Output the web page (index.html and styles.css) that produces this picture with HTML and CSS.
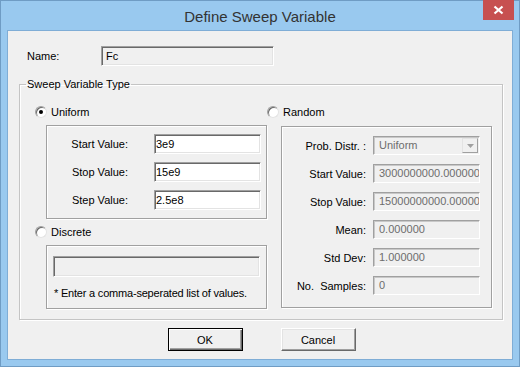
FILE: index.html
```html
<!DOCTYPE html>
<html lang="en">
<head>
  <meta charset="UTF-8" />
  <title>Define Sweep Variable</title>
  <link rel="stylesheet" href="styles.css">
</head>
<body>

  <div class="window">
    <div class="titlebar">
      <span></span>
      <div class="title">Define Sweep Variable</div>
      <div class="close">
        <svg width="31" height="20" viewBox="0 0 31 20">
          <path d="M11.5 6.5 L19.5 13.5 M19.5 6.5 L11.5 13.5" stroke="#fff" stroke-width="2.2" />
        </svg>
      </div>
    </div>

    <div class="client">
      <div class="name-row">
        <label>Name:</label>
        <div class="field name-field">Fc</div>
      </div>

      <fieldset class="group">
        <legend>Sweep Variable Type</legend>
        <div class="cols">

          <div class="col-left">
            <div class="radio-row">
              <span class="radio checked"></span>Uniform
            </div>
            <div class="box uniform-box">
              <label>Start Value:</label><div class="field white">3e9</div>
              <label>Stop Value:</label><div class="field white">15e9</div>
              <label>Step Value:</label><div class="field white">2.5e8</div>
            </div>

            <div class="radio-row">
              <span class="radio"></span>Discrete
            </div>
            <div class="box discrete-box">
              <div class="field list-field"></div>
              <div class="note">* Enter a comma-seperated list of values.</div>
            </div>
          </div>

          <div class="col-right">
            <div class="radio-row">
              <span class="radio"></span>Random
            </div>
            <div class="box random-box">
              <label>Prob. Distr. :</label>
              <div class="field off select">
                <span>Uniform</span>
                <span class="drop"><svg width="7" height="4" viewBox="0 0 7 4"><path d="M0 0 H7 L3.5 4 Z" fill="#a0a0a0" /></svg></span>
              </div>
              <label>Start Value:</label><div class="field off">3000000000.000000</div>
              <label>Stop Value:</label><div class="field off">15000000000.000000</div>
              <label>Mean:</label><div class="field off">0.000000</div>
              <label>Std Dev:</label><div class="field off">1.000000</div>
              <label>No.&nbsp; Samples:</label><div class="field off">0</div>
            </div>
          </div>

        </div>
      </fieldset>

      <div class="buttons">
        <button class="btn default">OK</button>
        <button class="btn">Cancel</button>
      </div>
    </div>
  </div>

</body>
</html>
```

FILE: styles.css
```css
* {
  box-sizing: border-box;
}

body {
  margin: 0;
  padding: 0;
  font-family: "Liberation Sans", Arial, sans-serif;
  font-size: 11px;
  color: #000;
  background: #99c9ef;
}

.window {
  width: 520px;
  height: 367px;
  background: #99c9ef;
  border: 1px solid #6f9cc4;
}

.titlebar {
  height: 29px;
  display: grid;
  grid-template-columns: 1fr auto 1fr;
  align-items: center;
}

.title {
  font-size: 15px;
  color: #333;
  padding-top: 1px;
}

.close {
  justify-self: end;
  align-self: start;
  width: 31px;
  height: 20px;
  margin-top: -1px;
  margin-right: 5px;
  background: #c75050;
}

.close svg {
  display: block;
}

.client {
  margin: 0 6px;
  width: 506px;
  height: 330px;
  background: #f0f0f0;
  border: 1px solid #7fadd6;
  padding-top: 15px;
}

/* sunken edit boxes */
.field {
  height: 20px;
  line-height: 18px;
  background: #f0f0f0;
  border-top: 1px solid #a0a0a0;
  border-left: 1px solid #a0a0a0;
  border-bottom: 1px solid #fff;
  border-right: 1px solid #fff;
  box-shadow: inset 1px 1px 0 #696969, inset -1px -1px 0 #e3e3e3;
  padding-left: 2px;
  white-space: nowrap;
  overflow: hidden;
}

.field.white {
  background: #fff;
  padding-left: 1px;
}

.field.off {
  color: #6d6d6d;
  height: 19px;
  line-height: 17px;
  padding-left: 5px;
  box-shadow: inset 1px 1px 0 #c8c8c8, inset -1px -1px 0 #f0f0f0;
}

.name-row {
  display: grid;
  grid-template-columns: 74px 173px;
  align-items: center;
  padding-left: 19px;
}

.name-field {
  padding-left: 4px;
}

.group {
  margin: 12px 9px 0 11px;
  padding: 14px 10px 10px 0;
  border: 1px solid #c4c4c4;
  box-shadow: inset 1px 1px 0 #fff, 1px 1px 0 #fff;
}

.group legend {
  margin-left: 6px;
  padding: 0 1px;
  line-height: 13px;
}

.cols {
  display: grid;
  grid-template-columns: 232px 225px;
  padding-left: 15px;
}

.radio-row {
  height: 14px;
  display: flex;
  align-items: center;
  gap: 4px;
}

.radio {
  width: 12px;
  height: 12px;
  border-radius: 50%;
  background: #fff;
  border: 1px solid;
  border-color: #a0a0a0 #e3e3e3 #e3e3e3 #a0a0a0;
  box-shadow: inset 1px 1px 0 #696969;
  display: flex;
  align-items: center;
  justify-content: center;
}

.radio.checked::after {
  content: "";
  width: 4px;
  height: 4px;
  border-radius: 50%;
  background: #000;
}

.box {
  border: 1px solid #a0a0a0;
  box-shadow: inset 1px 1px 0 #fff, 1px 1px 0 #fff;
}

.box label {
  text-align: right;
}

.uniform-box {
  margin: 6px 0 6px 11px;
  width: 221px;
  display: grid;
  grid-template-columns: 1fr 107px;
  column-gap: 26px;
  row-gap: 8px;
  align-items: center;
  padding: 8px 5px 8px 0;
}

.discrete-box {
  margin: 6px 0 0 11px;
  width: 221px;
  padding: 10px 6px 8px 6px;
}

.list-field {
  height: 21px;
}

.note {
  margin: 10px 0 0 1px;
  line-height: 13px;
  letter-spacing: -0.2px;
}

.random-box {
  margin: 7px 0 0 14px;
  width: 211px;
  display: grid;
  grid-template-columns: 1fr 107px;
  column-gap: 7px;
  row-gap: 9px;
  align-items: center;
  padding: 9px 11px 12px 0;
}

.select {
  display: flex;
  align-items: center;
  justify-content: space-between;
  padding-right: 1px;
}

.drop {
  width: 16px;
  height: 15px;
  display: flex;
  align-items: center;
  justify-content: center;
  border: 1px solid;
  border-color: #e3e3e3 #a0a0a0 #a0a0a0 #e3e3e3;
  background: #f0f0f0;
}

.drop svg {
  display: block;
}

.buttons {
  display: flex;
  justify-content: center;
  gap: 38px;
  margin-top: 8px;
  padding-left: 3px;
}

.btn {
  width: 75px;
  height: 23px;
  font-family: "Liberation Sans", Arial, sans-serif;
  font-size: 11px;
  color: #000;
  background: #f0f0f0;
  border: 1px solid;
  border-color: #fff #696969 #696969 #fff;
  box-shadow: inset -1px -1px 0 #a0a0a0, inset 1px 1px 0 #e3e3e3;
  padding: 0;
}

.btn.default {
  border-color: #000;
  box-shadow: inset 1px 1px 0 #fff, inset -1px -1px 0 #696969, inset -2px -2px 0 #a0a0a0;
}
```
